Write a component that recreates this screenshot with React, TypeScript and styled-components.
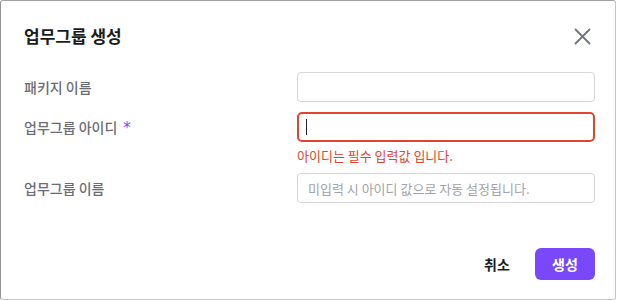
import React from "react";
import styled, { createGlobalStyle } from "styled-components";

const Global = createGlobalStyle`
  html, body { margin: 0; padding: 0; background: #ffffff; }
  body { font-family: "Noto Sans CJK KR", "Noto Sans", sans-serif; }
  * { box-sizing: border-box; }
`;

const Dialog = styled.div`
  width: 616px;
  height: 300px;
  background: #fff;
  border-style: solid;
  border-width: 1px;
  border-color: #a3a3a3 #c6c6c6 #c6c6c6 #949494;
  border-radius: 3px;
  padding: 19px 20px 19px 23px;
  display: flex;
  flex-direction: column;
`;

const Header = styled.div`
  height: 32px;
  display: flex;
  align-items: center;
  justify-content: space-between;
`;

const Title = styled.h2`
  margin: 0;
  font-size: 17px;
  font-weight: 700;
  color: #1c1c1e;
  line-height: 32px;
`;

const CloseButton = styled.button`
  width: 24px;
  height: 24px;
  margin-right: 1px;
  padding: 0;
  border: none;
  background: transparent;
  display: flex;
  align-items: center;
  justify-content: center;
  color: #6e7480;
  cursor: pointer;
`;

const Form = styled.div`
  margin-top: 20px;
  display: flex;
  flex-direction: column;
  gap: 10px;
`;

const Row = styled.div`
  display: grid;
  grid-template-columns: 273px 1fr;
  align-items: start;
`;

const Label = styled.label`
  font-size: 14px;
  font-weight: 500;
  color: #6b6d75;
  line-height: 30px;
  height: 30px;
`;

const Required = styled.span`
  color: #7b4dfa;
  margin-left: 6px;
  font-family: "DejaVu Sans", sans-serif;
  font-size: 15px;
  font-weight: 400;
`;

const Field = styled.div`
  display: flex;
  flex-direction: column;
`;

const InputWrap = styled.div`
  position: relative;
`;

const Input = styled.input<{ $error?: boolean }>`
  width: 100%;
  height: 30px;
  border: ${(p) => (p.$error ? "2px solid #e6432f" : "1px solid #d6d6dc")};
  border-radius: ${(p) => (p.$error ? "5px" : "4px")};
  padding: 0 ${(p) => (p.$error ? "9px" : "10px")};
  font-family: inherit;
  font-size: 13px;
  color: #1f2937;
  outline: none;
  background: #fff;
  caret-color: transparent;
  &::placeholder { color: #a1a3aa; }
`;

const Caret = styled.span`
  position: absolute;
  left: 9px;
  top: 7px;
  width: 1px;
  height: 16px;
  background: #1f2430;
`;

const ErrorText = styled.div`
  margin-top: 6px;
  font-size: 13px;
  line-height: 15px;
  color: #e6432f;
`;

const Footer = styled.div`
  margin-top: auto;
  display: flex;
  justify-content: flex-end;
  gap: 8px;
`;

const Button = styled.button<{ $primary?: boolean }>`
  width: 60px;
  height: 32px;
  border: none;
  border-radius: 6px;
  font-family: inherit;
  font-size: 14px;
  font-weight: 700;
  background: ${(p) => (p.$primary ? "#7a48fb" : "transparent")};
  color: ${(p) => (p.$primary ? "#ffffff" : "#1c1c1e")};
  cursor: pointer;
`;

export default function App() {
  return (
    <>
      <Global />
      <Dialog>
        <Header>
          <Title>업무그룹 생성</Title>
          <CloseButton aria-label="닫기">
            <svg width="17" height="17" viewBox="0 0 17 17" fill="none">
              <path d="M1.5 1.5 L15.5 15.5 M15.5 1.5 L1.5 15.5" stroke="currentColor" strokeWidth="1.8" strokeLinecap="round" />
            </svg>
          </CloseButton>
        </Header>
        <Form>
          <Row>
            <Label>패키지 이름</Label>
            <Field>
              <Input />
            </Field>
          </Row>
          <Row>
            <Label>
              업무그룹 아이디<Required>*</Required>
            </Label>
            <Field>
              <InputWrap>
                <Input $error />
                <Caret />
              </InputWrap>
              <ErrorText>아이디는 필수 입력값 입니다.</ErrorText>
            </Field>
          </Row>
          <Row>
            <Label>업무그룹 이름</Label>
            <Field>
              <Input placeholder="미입력 시 아이디 값으로 자동 설정됩니다." />
            </Field>
          </Row>
        </Form>
        <Footer>
          <Button>취소</Button>
          <Button $primary>생성</Button>
        </Footer>
      </Dialog>
    </>
  );
}
